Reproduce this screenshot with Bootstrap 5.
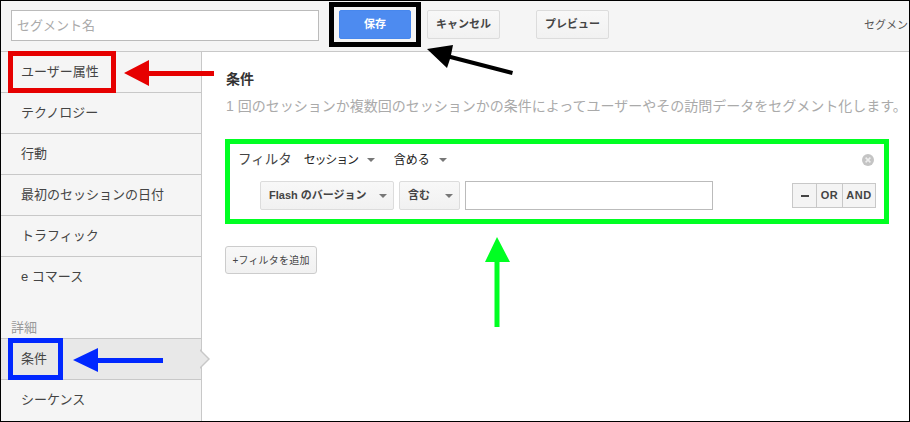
<!DOCTYPE html>
<html lang="ja"><head><meta charset="utf-8"><title>セグメント</title>
<link rel="stylesheet" href="https://cdn.jsdelivr.net/npm/bootstrap@5.3.0/dist/css/bootstrap.min.css">
<style>
html,body{margin:0;height:100%;background:#000}
body{font-family:"Liberation Sans","Noto Sans CJK JP",sans-serif;color:#333;overflow:hidden}
.shell{position:relative;width:908px;height:420px;margin:1px;background:#fff;overflow:hidden}
.topbar{height:51px;background:#f5f5f5;border-bottom:1px solid #c8c8c8;padding:9px 0 0 10px;white-space:nowrap}
.seg-name{width:308px;height:31px;border:1px solid #bbb;background:#fff;border-radius:0;font-size:13px;padding:0 5px;color:#999;line-height:29px}
.seg-name::placeholder{color:#aaa}
.gbtn{height:29px;border:1px solid #dcdcdc;border-radius:2px;background:linear-gradient(#f8f8f8,#f1f1f1);color:#444;font-size:11px;font-weight:700;padding:0;display:flex;align-items:center;justify-content:center;flex:none}
.save-b{width:72px;margin-left:20px;background:#4d8bf0;border-color:#4787ed;color:#fff}
.cancel-b{width:73px;margin-left:16px}
.preview-b{width:73px;margin-left:36px}
.seg-label{margin-left:auto;padding-top:7px;font-size:11px;line-height:16px;color:#555;white-space:nowrap;flex:none;padding-right:1px}
.body-row{height:369px}
.side{width:201px;flex:none;background:#f5f5f5;border-right:1px solid #c8c8c8;font-size:13px}
.side-item{height:41px;line-height:39px;padding-left:20px;border-bottom:1px solid #c8c8c8;color:#444;position:relative}
.side-item.last{border-bottom:0}
.side-item.open-end{border-bottom:0}
.side-head{height:41px;padding:21px 0 0 10px;font-size:13px;line-height:18px;color:#999;border-bottom:1px solid #c8c8c8}
.side-item.act{background:#e8e8e8}
.side-item.act::after{content:"";position:absolute;left:199px;top:10px;width:0;height:0;border-top:10px solid transparent;border-bottom:10px solid transparent;border-left:10px solid #c8c8c8}
.side-item.act::before{content:"";position:absolute;left:198px;top:11px;width:0;height:0;border-top:9px solid transparent;border-bottom:9px solid transparent;border-left:9px solid #e8e8e8;z-index:1}
.main-pane{padding:18px 0 0 24px;min-width:0;flex:1}
.cond-title{font-size:14px;font-weight:700;line-height:18px;color:#333;margin:0}
.cond-sub{font-size:14px;line-height:20px;color:#aaa;margin:8px 0 0;white-space:nowrap}
.filter-box{width:654px;height:75px;margin:31px 0 0 5px;padding:0 9px 0 7px}
.f-line{height:26px;font-size:12px;color:#222}
.f-word{font-size:13.500px;color:#444;margin-right:12px}
.caret-g{display:inline-block;width:0;height:0;border-left:4px solid transparent;border-right:4px solid transparent;border-top:4px solid #777;flex:none}
.f-sel{margin-right:19px}
.f-sel .caret-g{margin-left:9px}
.tight-w{letter-spacing:-1.2px}
.x-ic{margin-left:auto;width:12px;height:12px;flex:none;margin-right:2px}
.f-row{margin-top:8px;padding-left:22px}
.sel-b{justify-content:flex-start;padding-left:8px}
.sel-b .caret-g{margin-left:auto;margin-right:6px}
.ver-b{width:134px}
.inc-b{width:61px;margin-left:5px;font-size:11px}
.val-in{width:248px;height:29px;margin-left:5px;border:1px solid #bbb;background:#fff;border-radius:0;flex:none}
.tri{margin-left:auto;height:25px;display:flex;border:1px solid #c8c8c8;background:#f4f4f4;font-size:11px;font-weight:700;color:#444;letter-spacing:.5px}
.tri span{display:flex;align-items:center;justify-content:center;border-left:1px solid #c8c8c8}
.tri span:first-child{border-left:0;width:23px}
.tri span:nth-child(2){width:26px}
.tri span:nth-child(3){width:33px}
.dash-m{display:block;width:8px;height:2px;background:#444}
.add-b{width:92px;height:28px;margin:24px 0 0 -1px;font-size:10px;font-weight:400;letter-spacing:.2px;border-color:#ccc;border-radius:3px}
.marks{position:absolute;left:-1px;top:-1px;width:910px;height:422px;pointer-events:none;z-index:5}
</style></head><body>
<div class="shell">
  <div class="topbar d-flex align-items-start">
    <input class="seg-name" type="text" placeholder="セグメント名">
    <button class="gbtn save-b" type="button">保存</button>
    <button class="gbtn cancel-b" type="button">キャンセル</button>
    <button class="gbtn preview-b" type="button">プレビュー</button>
    <div class="seg-label">セグメン</div>
  </div>
  <div class="body-row d-flex">
    <div class="side">
      <div class="side-item">ユーザー属性</div>
      <div class="side-item">テクノロジー</div>
      <div class="side-item">行動</div>
      <div class="side-item">最初のセッションの日付</div>
      <div class="side-item">トラフィック</div>
      <div class="side-item open-end">e コマース</div>
      <div class="side-head">詳細</div>
      <div class="side-item act">条件</div>
      <div class="side-item last">シーケンス</div>
    </div>
    <div class="main-pane">
      <h2 class="cond-title">条件</h2>
      <p class="cond-sub">1 回のセッションか複数回のセッションかの条件によってユーザーやその訪問データをセグメント化します。</p>
      <div class="filter-box">
        <div class="f-line d-flex align-items-center">
          <span class="f-word">フィルタ</span>
          <span class="f-sel d-flex align-items-center"><span class="tight-w">セッション</span><i class="caret-g"></i></span>
          <span class="f-sel d-flex align-items-center">含める<i class="caret-g"></i></span>
          <svg class="x-ic" viewBox="0 0 12 12"><circle cx="6" cy="6" r="6" fill="#c4c4c4"/><path d="M3.6 3.6l4.8 4.8M8.4 3.6L3.6 8.4" stroke="#eee" stroke-width="1.500"/></svg>
        </div>
        <div class="f-row d-flex align-items-center">
          <button class="gbtn sel-b ver-b" type="button">Flash のバージョン<i class="caret-g"></i></button>
          <button class="gbtn sel-b inc-b" type="button">含む<i class="caret-g"></i></button>
          <input class="val-in" type="text" aria-label="値">
          <div class="tri"><span><i class="dash-m"></i></span><span>OR</span><span>AND</span></div>
        </div>
      </div>
      <button class="gbtn add-b" type="button">+フィルタを追加</button>
    </div>
  </div>
  <svg class="marks" viewBox="0 0 910 422" aria-hidden="true">
    <rect x="331.500" y="4.500" width="87" height="40" fill="none" stroke="#000" stroke-width="5"/>
    <path d="M427 49L447 68 450 59 512 75 513 71 451 55 453 45z" fill="#000"/>
    <rect x="10.500" y="53.500" width="103" height="37" fill="none" stroke="#e60000" stroke-width="5"/>
    <path d="M124 73L149 60V71H214V76H149V86z" fill="#e60000"/>
    <rect x="227.500" y="141.500" width="659" height="80" fill="none" stroke="#00ff22" stroke-width="5"/>
    <path d="M497 237L510 262H499.500V327H494.500V262H485z" fill="#00ff22"/>
    <rect x="10.500" y="340.500" width="50" height="37" fill="none" stroke="#0027ff" stroke-width="5"/>
    <path d="M73 360L98 348V358H163V363H98V372z" fill="#0027ff"/>
  </svg>
</div>
<script src="https://cdn.jsdelivr.net/npm/bootstrap@5.3.0/dist/js/bootstrap.bundle.min.js"></script>
</body></html>
